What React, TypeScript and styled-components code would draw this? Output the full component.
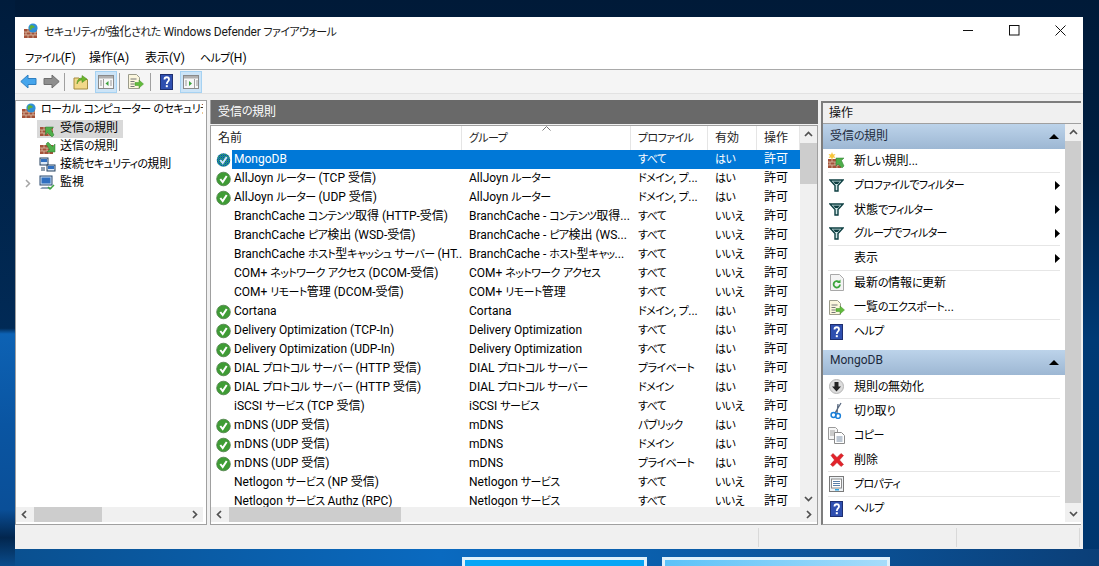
import React from "react";
import styled, { createGlobalStyle } from "styled-components";

const GlobalStyle = createGlobalStyle`
  html, body {
    margin: 0;
    padding: 0;
    width: 1099px;
    height: 566px;
    overflow: hidden;
  }
  body {
    font-family: "Roboto", "Noto Sans CJK JP", sans-serif;
    font-feature-settings: "palt";
    font-size: 12px;
    color: #000;
  }
  svg {
    flex: none;
  }
`;

const Desktop = styled.div`
  position: relative;
  width: 1099px;
  height: 566px;
  padding: 17px 16px 0 15px;
  box-sizing: border-box;
  overflow: hidden;
  background:
    linear-gradient(180deg, #001c3c 0%, #012a56 58%, #0d62b4 59%, #0a55a2 75%, #0a4f98 90%, #02264e 95%, #0a4c8c 100%) left top / 15px 100% no-repeat,
    linear-gradient(90deg, #0a4f8e 0%, #0a6ac0 40%, #0a5ba6 65%, #0b3f78 100%) left bottom / 100% 17px no-repeat,
    linear-gradient(180deg, #001a38 0%, #001f42 30%, #003a75 60%, #00366e 100%);
`;

const TaskThumb = styled.div<{ $left: number; $width: number; $tint: string }>`
  position: absolute;
  left: ${(p) => p.$left}px;
  top: 557px;
  width: ${(p) => p.$width}px;
  height: 12px;
  box-sizing: border-box;
  border: 3px solid #dff1fb;
  border-bottom: 0;
  background: ${(p) => p.$tint};
`;

const Window = styled.div`
  position: relative;
  width: 1068px;
  height: 532px;
  display: flex;
  flex-direction: column;
  background: #f0f0f0;
`;

const TitleBar = styled.div`
  height: 27px;
  flex: none;
  display: flex;
  align-items: center;
  background: #fff;
  padding-left: 8px;
`;

const TitleText = styled.span`
  margin-left: 5px;
  flex: 1;
  color: #1a1a1a;
  letter-spacing: -0.2px;
`;

const WinButton = styled.div`
  width: 46px;
  height: 27px;
  display: flex;
  align-items: center;
  justify-content: center;
`;

const MenuBar = styled.div`
  height: 25px;
  flex: none;
  display: flex;
  align-items: center;
  background: #fff;
  border-bottom: 1px solid #a9a9a9;
  padding-left: 10px;
`;

const MenuItem = styled.span<{ $width: number }>`
  width: ${(p) => p.$width}px;
  white-space: nowrap;
`;

const Toolbar = styled.div`
  height: 24px;
  flex: none;
  box-sizing: border-box;
  display: flex;
  align-items: center;
  background: #f5f5f5;
  padding-left: 1px;
  border-bottom: 1px solid #e2e2e2;
`;

const ToolButton = styled.div<{ $width: number; $active?: boolean }>`
  width: ${(p) => p.$width}px;
  height: 22px;
  box-sizing: border-box;
  display: flex;
  align-items: center;
  justify-content: center;
  background: ${(p) => (p.$active ? "#cce4f7" : "transparent")};
  border: 1px solid ${(p) => (p.$active ? "#a6d2f2" : "transparent")};
`;

const ToolSep = styled.div<{ $left: number; $right: number }>`
  width: 1px;
  height: 18px;
  margin: 0 ${(p) => p.$right}px 0 ${(p) => p.$left}px;
  background: #a0a0a0;
`;

const Main = styled.div`
  flex: 1;
  min-height: 0;
  display: flex;
  gap: 3px;
  padding: 6px 2px 1px 0;
`;

const TreePane = styled.div`
  width: 192px;
  flex: none;
  box-sizing: border-box;
  display: flex;
  flex-direction: column;
  background: #fff;
  border: 1px solid #a0a0a0;
  padding: 1px 3px 2px 0;
`;

const TreeList = styled.div`
  flex: 1;
  min-height: 0;
  overflow: hidden;
`;

const TreeRow = styled.div<{ $indent: number }>`
  height: 18px;
  display: flex;
  align-items: center;
  padding-left: ${(p) => p.$indent}px;
  white-space: nowrap;
  overflow: hidden;
`;

const TreeItem = styled.div<{ $selected?: boolean }>`
  height: 18px;
  flex: none;
  display: flex;
  align-items: center;
  padding: 0 5px 0 2px;
  background: ${(p) => (p.$selected ? "#d9d9d9" : "transparent")};
`;

const TreeLabel = styled.span`
  margin-left: 4px;
  padding-bottom: 6px;
`;

const Chevron = styled.span`
  width: 18px;
  flex: none;
  display: flex;
  justify-content: center;
`;

const CenterPane = styled.div`
  width: 608px;
  flex: none;
  display: flex;
  flex-direction: column;
  box-sizing: border-box;
  border-bottom: 1px solid #a0a0a0;
`;

const PaneHeader = styled.div`
  height: 24px;
  flex: none;
  box-sizing: border-box;
  display: flex;
  align-items: center;
  padding: 0 0 4px 7px;
  background: #696969;
  color: #fff;
  border-left: 1px solid #a0a0a0;
`;

const ListFrame = styled.div`
  flex: 1;
  min-height: 0;
  margin-top: 1px;
  display: flex;
  flex-direction: column;
  background: #fff;
  box-sizing: border-box;
  border: 1px solid #a0a0a0;
  border-bottom: 0;
  padding-bottom: 2px;
`;

const ListBody = styled.div`
  flex: 1;
  min-height: 0;
  display: flex;
`;

const Table = styled.div`
  flex: 1;
  min-width: 0;
  overflow: hidden;
`;

const HeaderRow = styled.div`
  height: 24px;
  display: grid;
  grid-template-columns: 251px 169px 77px 49px 43px;
  position: relative;
  white-space: nowrap;
`;

const HeaderCell = styled.div`
  display: flex;
  align-items: center;
  padding: 0 0 3px 7px;
  border-right: 1px solid #e5e5e5;
  color: #222;
`;

const SortMark = styled.svg`
  position: absolute;
  left: 331px;
  top: 0;
`;

const Row = styled.div`
  height: 19px;
  display: grid;
  grid-template-columns: 251px 169px 77px 49px 43px;
  align-items: center;
  white-space: nowrap;
`;

const NameCell = styled.div`
  display: flex;
  align-items: center;
  height: 19px;
  padding-left: 5px;
  min-width: 0;
`;

const NameText = styled.span<{ $selected?: boolean }>`
  flex: 1;
  line-height: 19px;
  padding-left: 2px;
  background: ${(p) => (p.$selected ? "#0078d7" : "transparent")};
  color: ${(p) => (p.$selected ? "#fff" : "#000")};
  overflow: hidden;
`;

const IconSlot = styled.span`
  width: 16px;
  height: 16px;
  flex: none;
  display: flex;
`;

const Cell = styled.div<{ $selected?: boolean }>`
  height: 19px;
  line-height: 19px;
  padding-left: 7px;
  background: ${(p) => (p.$selected ? "#0078d7" : "transparent")};
  color: ${(p) => (p.$selected ? "#fff" : "#000")};
  overflow: hidden;
`;

const VScroll = styled.div<{ $width: number }>`
  width: ${(p) => p.$width}px;
  flex: none;
  display: flex;
  flex-direction: column;
  background: #f0f0f0;
`;

const ScrollArrow = styled.div`
  flex: none;
  width: 16px;
  height: 16px;
  display: flex;
  align-items: center;
  justify-content: center;
`;

const VThumb = styled.div<{ $offset: number; $height: number }>`
  flex: none;
  margin-top: ${(p) => p.$offset}px;
  height: ${(p) => p.$height}px;
  background: #cdcdcd;
`;

const Spacer = styled.div`
  flex: 1;
`;

const HScroll = styled.div`
  height: 15px;
  flex: none;
  display: flex;
  align-items: center;
  background: #f0f0f0;
`;

const HThumb = styled.div<{ $offset: number; $width: number }>`
  flex: none;
  margin-left: ${(p) => p.$offset}px;
  width: ${(p) => p.$width}px;
  height: 15px;
  background: #cdcdcd;
`;

const ActionPane = styled.div`
  flex: 1;
  min-width: 0;
  display: flex;
  flex-direction: column;
  box-sizing: border-box;
  margin-top: 1px;
  border-top: 2px solid #7d7d7d;
  border-left: 2px solid #7d7d7d;
  background: #fff;
  padding-bottom: 2px;
  border-bottom: 1px solid #a0a0a0;
`;

const ActionTitle = styled.div`
  height: 21px;
  flex: none;
  box-sizing: border-box;
  display: flex;
  align-items: center;
  padding: 0 0 4px 6px;
  background: #f0f0f0;
  border-bottom: 1px solid #a0a0a0;
  color: #111;
`;

const ActionBody = styled.div`
  flex: 1;
  min-height: 0;
  display: flex;
`;

const ActionList = styled.div`
  flex: 1;
  min-width: 0;
  overflow: hidden;
`;

const SectionHeader = styled.div<{ $gap?: number }>`
  height: 25px;
  margin-top: ${(p) => p.$gap ?? 0}px;
  box-sizing: border-box;
  display: flex;
  align-items: center;
  justify-content: space-between;
  padding: 0 6px 0 7px;
  background: linear-gradient(180deg, #bcd3ea 0%, #9db7d3 100%);
  color: #1c2a3c;
`;

const SectionLabel = styled.span`
  padding-bottom: 5px;
`;

const ActionRow = styled.div<{ $height: number; $divider?: boolean }>`
  height: ${(p) => p.$height}px;
  margin: 0 5px;
  box-sizing: border-box;
  display: flex;
  align-items: center;
  border-bottom: 1px solid ${(p) => (p.$divider ? "#e6e6e6" : "transparent")};
`;

const ActionLabel = styled.span`
  margin-left: 9px;
  padding-bottom: 3px;
  flex: 1;
`;

const ActionIcon = styled.span`
  width: 17px;
  height: 17px;
  flex: none;
  display: flex;
  align-items: center;
  justify-content: center;
`;

const StatusBar = styled.div`
  height: 23px;
  flex: none;
  display: flex;
  justify-content: flex-end;
  padding-right: 3px;
  background: #f0f0f0;
`;

const StatusCell = styled.div<{ $width: number }>`
  width: ${(p) => p.$width}px;
  box-sizing: border-box;
  margin: 2px 0;
  border-left: 1px solid #d9d9d9;
  &:last-child {
    border-right: 1px solid #d9d9d9;
  }
`;

// Yu Gothic kana sit much tighter than Noto's, so kana runs get their own span
const Kana = styled.span`
  font-size: 11px;
  letter-spacing: -0.6px;
`;

const jp = (text: string) =>
  text.split(/([\u3040-\u30ff]+)/).map((part, i) => (i % 2 === 1 ? <Kana key={i}>{part}</Kana> : part));

// icons

const Bricks = () => (
  <>
    <rect x="1" y="6" width="13" height="9" fill="#a4523a" />
    <path d="M1 9h13M1 12h13M5 6v3M10 6v3M3 9v3M8 9v3M12 9v3M5 12v3M10 12v3" stroke="#dcc0a8" strokeWidth="0.8" />
  </>
);

const FirewallIcon = () => (
  <svg width="16" height="16" viewBox="0 0 16 16">
    <Bricks />
    <circle cx="10" cy="5" r="4.6" fill="#2f8fd8" />
    <path d="M7 3c2-2 3 0 4 0s1 2-1 2-1 2-2 2-2-2-1-4z" fill="#5cb03c" />
  </svg>
);

const InboundIcon = () => (
  <svg width="17" height="16" viewBox="0 0 17 16">
    <Bricks />
    <path d="M15 14l-2 2-4.500-4.500L6.500 14V6h8l-2.500 2.500z" fill="#4fae4a" stroke="#2e7d32" strokeWidth="0.5" />
  </svg>
);

const OutboundIcon = () => (
  <svg width="17" height="16" viewBox="0 0 17 16">
    <Bricks />
    <path d="M7 5l2-2 4.500 4.500L16 5v8H8l2.500-2.500z" fill="#4fae4a" stroke="#2e7d32" strokeWidth="0.5" />
  </svg>
);

const NetworkIcon = () => (
  <svg width="17" height="16" viewBox="0 0 17 16">
    <rect x="1" y="1" width="8" height="7" fill="#dbe8f5" stroke="#24405f" />
    <rect x="2" y="2" width="6" height="3" fill="#2f6fc0" />
    <rect x="8" y="8" width="8" height="6" fill="#dbe8f5" stroke="#24405f" />
    <rect x="9" y="9" width="6" height="3" fill="#2f6fc0" />
    <path d="M2 11h4M2 13h4" stroke="#24405f" />
  </svg>
);

const MonitorIcon = () => (
  <svg width="17" height="16" viewBox="0 0 17 16">
    <rect x="1" y="1" width="12" height="9" fill="#cfe0f2" stroke="#2b4a70" />
    <rect x="2.500" y="2.500" width="9" height="6" fill="#2f6fc0" />
    <path d="M3 12h8l2 2H1z" fill="#8fa3b8" />
    <path d="M9 12l2 2 4-4" stroke="#3fa63f" strokeWidth="1.500" fill="none" />
  </svg>
);

const CheckIcon = () => (
  <svg width="16" height="16" viewBox="0 0 16 16">
    <circle cx="7.500" cy="8" r="6.800" fill="#3f9c35" stroke="#4d7f48" strokeWidth="0.8" />
    <path d="M4.300 8l2.400 3 4-6" stroke="#fff" strokeWidth="2" fill="none" />
  </svg>
);

const ShieldCheckIcon = () => (
  <svg width="16" height="16" viewBox="0 0 16 16">
    <defs>
      <pattern id="dither" width="2" height="2" patternUnits="userSpaceOnUse">
        <rect width="2" height="2" fill="#0078d7" />
        <rect width="1" height="1" fill="#3f9c35" />
        <rect x="1" y="1" width="1" height="1" fill="#2b6a60" />
      </pattern>
    </defs>
    <circle cx="7.500" cy="8" r="6.800" fill="url(#dither)" />
    <path d="M4.300 8l2.400 3 4-6" stroke="#cfe6f8" strokeWidth="2" fill="none" />
  </svg>
);

const BackIcon = () => (
  <svg width="17" height="15" viewBox="0 0 17 15">
    <path d="M.8 7.500L8 1v3.500h8v6H8V14z" fill="#45a5ec" stroke="#2f7fc0" strokeLinejoin="round" />
  </svg>
);

const ForwardIcon = () => (
  <svg width="17" height="15" viewBox="0 0 17 15">
    <path d="M16.200 7.500L9 1v3.500H1v6h8V14z" fill="#8e8e8e" stroke="#6e6e6e" strokeLinejoin="round" />
  </svg>
);

const FolderUpIcon = () => (
  <svg width="16" height="16" viewBox="0 0 16 16">
    <path d="M1 4h5l1 1.500h7.500V15H1z" fill="#f2d889" stroke="#a58a3f" />
    <path d="M4 10c0-4 2-6 5-6V1.500L14 5l-5 3.500V6c-2 0-4 1-5 4z" fill="#6cb52d" stroke="#4b8a1c" strokeWidth="0.5" />
  </svg>
);

const PaneIcon = ({ flip }: { flip?: boolean }) => (
  <svg width="16" height="14" viewBox="0 0 16 14">
    <rect x="0.500" y="0.500" width="15" height="13" fill="#f7f7f7" stroke="#8a8a8a" />
    <rect x="1" y="1" width="14" height="2.500" fill="#b0b0b0" />
    <path d={flip ? "M11.500 4v9" : "M5.500 4v9"} stroke="#a0a0a0" />
    <path d={flip ? "M6 6l3 2.500L6 11z" : "M10.500 6l-3 2.500 3 2.500z"} fill="#3ea33e" />
    <path d={flip ? "M2 6h2M2 8h2M2 10h2M13 6h2M13 8h2M13 10h2" : "M2 6h2M2 8h2M2 10h2M12 6h2M12 8h2M12 10h2"} stroke="#9a9a9a" />
  </svg>
);

const ExportIcon = () => (
  <svg width="17" height="17" viewBox="0 0 17 17">
    <path d="M1.500 1.500h8l3 3v11h-11z" fill="#fbf6dd" stroke="#9c9c8c" />
    <path d="M3.500 6h6M3.500 8.500h4M3.500 11h4M3.500 13.500h4" stroke="#777" />
    <path d="M8 9.500h4V7l4.500 4-4.500 4v-2.500H8z" fill="#62bb3c" stroke="#45912a" strokeWidth="0.5" />
  </svg>
);

const HelpIcon = () => (
  <svg width="13" height="16" viewBox="0 0 13 16">
    <rect x="0.500" y="0.500" width="12" height="15" fill="#2f4fb0" stroke="#1f2f70" />
    <path d="M4.500 5.500c0-3 4.500-3 4.500 0 0 2-2.200 2-2.200 4.500" stroke="#fff" strokeWidth="1.800" fill="none" />
    <rect x="5.800" y="11.200" width="2" height="2" fill="#fff" />
  </svg>
);

const NewRuleIcon = () => (
  <svg width="17" height="17" viewBox="0 0 17 17">
    <rect x="0" y="7" width="13" height="9" fill="#a4523a" />
    <path d="M0 10h13M0 13h13M4 7v3M9 7v3M2 10v3M7 10v3M11 10v3M4 13v3M9 13v3" stroke="#dcc0a8" strokeWidth="0.8" />
    <path d="M16 14l-2 2-4-4-2 2V6h8l-2.500 2.500z" fill="#4fae4a" stroke="#2e7d32" strokeWidth="0.5" />
    <path d="M4 0l1 2.500L7.500 2 6 4l1.500 2L5 5.500 4 8 3 5.500.5 6 2 4 .5 2 3 2.500z" fill="#f8c63c" />
  </svg>
);

const FilterIcon = () => (
  <svg width="15" height="13" viewBox="0 0 15 13">
    <path d="M1 1h13L9 6.500V12H6V6.500z" fill="#cfe6e6" stroke="#0e3f42" strokeWidth="1.400" />
    <path d="M4 2.500h7L8.800 5H6.200z" fill="#0e3f42" />
  </svg>
);

const RefreshIcon = () => (
  <svg width="14" height="17" viewBox="0 0 14 17">
    <path d="M.5.500h9l4 4v12H.5z" fill="#f4f4f4" stroke="#a8a8a8" />
    <path d="M10 10.500a3.200 3.200 0 1 1-1-2.500" stroke="#3ca63c" strokeWidth="1.800" fill="none" />
    <path d="M10.500 5.500v3.500H7z" fill="#3ca63c" />
  </svg>
);

const DisableIcon = () => (
  <svg width="15" height="15" viewBox="0 0 15 15">
    <circle cx="7.500" cy="7.500" r="7" fill="#dcdcdc" stroke="#b5b5b5" />
    <path d="M5.500 3h4v4.500H12l-4.500 5-4.500-5h2.500z" fill="#222" />
  </svg>
);

const ScissorsIcon = () => (
  <svg width="13" height="17" viewBox="0 0 13 17">
    <path d="M11 1L5 11M8 2L7 11" stroke="#5a6a80" strokeWidth="1.300" fill="none" />
    <circle cx="3.500" cy="13" r="2.400" fill="none" stroke="#1a7fd8" strokeWidth="1.500" />
    <circle cx="8" cy="14" r="2.400" fill="none" stroke="#1a7fd8" strokeWidth="1.500" />
  </svg>
);

const CopyIcon = () => (
  <svg width="17" height="17" viewBox="0 0 17 17">
    <path d="M.5.500h7l2 2v10h-9z" fill="#f6f6f6" stroke="#9a9a9a" />
    <path d="M2 4h5M2 6h5M2 8h5" stroke="#a0a0a0" />
    <path d="M6.500 5.500h7l3 3v8h-10z" fill="#fff" stroke="#8a8a8a" />
    <path d="M8.500 10h6M8.500 12h6M8.500 14h6" stroke="#7b8ea6" />
  </svg>
);

const DeleteIcon = () => (
  <svg width="16" height="16" viewBox="0 0 16 16">
    <path d="M2 3.500l2-2L8 5.500l4-4 2.500 2L10.500 8l4 4.500-2.500 2L8 10.500l-4 4-2.500-2L5.500 8z" fill="#e3222a" stroke="#b01a1a" strokeWidth="0.5" />
  </svg>
);

const PropertiesIcon = () => (
  <svg width="15" height="16" viewBox="0 0 15 16">
    <rect x="0.500" y="0.500" width="14" height="15" fill="#eef2f5" stroke="#7a7a7a" />
    <rect x="2.500" y="3" width="10" height="9" fill="#fff" stroke="#8a8a8a" />
    <path d="M4 5.500h7M4 7.500h7M4 9.500h7" stroke="#5a7fa8" />
    <rect x="6" y="13" width="4" height="1.500" fill="#29a5e6" />
  </svg>
);

const ArrowUp = () => (
  <svg width="9" height="6" viewBox="0 0 9 6">
    <path d="M1 5l3.500-3.500L8 5" stroke="#505050" strokeWidth="1.700" fill="none" />
  </svg>
);

const ArrowDown = () => (
  <svg width="9" height="6" viewBox="0 0 9 6">
    <path d="M1 1l3.500 3.500L8 1" stroke="#505050" strokeWidth="1.700" fill="none" />
  </svg>
);

const ArrowLeft = () => (
  <svg width="6" height="9" viewBox="0 0 6 9">
    <path d="M5 1L1.500 4.500 5 8" stroke="#505050" strokeWidth="1.700" fill="none" />
  </svg>
);

const ArrowRight = () => (
  <svg width="6" height="9" viewBox="0 0 6 9">
    <path d="M1 1l3.500 3.500L1 8" stroke="#505050" strokeWidth="1.700" fill="none" />
  </svg>
);

const TriUp = () => (
  <svg width="10" height="5" viewBox="0 0 10 5">
    <path d="M0 5l5-5 5 5z" fill="#000" />
  </svg>
);

const TriRight = () => (
  <svg width="5" height="9" viewBox="0 0 5 9">
    <path d="M0 0l5 4.500L0 9z" fill="#000" />
  </svg>
);

type Rule = {
  name: string;
  group: string;
  profile: string;
  enabled: string;
  state: "on" | "off" | "selected";
};

const ALL = "すべて";
const DOMAIN_ETC = "ドメイン, プ...";

const rules: Rule[] = [
  { name: "MongoDB", group: "", profile: ALL, enabled: "はい", state: "selected" },
  { name: "AllJoyn ルーター (TCP 受信)", group: "AllJoyn ルーター", profile: DOMAIN_ETC, enabled: "はい", state: "on" },
  { name: "AllJoyn ルーター (UDP 受信)", group: "AllJoyn ルーター", profile: DOMAIN_ETC, enabled: "はい", state: "on" },
  { name: "BranchCache コンテンツ取得 (HTTP-受信)", group: "BranchCache - コンテンツ取得...", profile: ALL, enabled: "いいえ", state: "off" },
  { name: "BranchCache ピア検出 (WSD-受信)", group: "BranchCache - ピア検出 (WS...", profile: ALL, enabled: "いいえ", state: "off" },
  { name: "BranchCache ホスト型キャッシュ サーバー (HT...", group: "BranchCache - ホスト型キャッ...", profile: ALL, enabled: "いいえ", state: "off" },
  { name: "COM+ ネットワーク アクセス (DCOM-受信)", group: "COM+ ネットワーク アクセス", profile: ALL, enabled: "いいえ", state: "off" },
  { name: "COM+ リモート管理 (DCOM-受信)", group: "COM+ リモート管理", profile: ALL, enabled: "いいえ", state: "off" },
  { name: "Cortana", group: "Cortana", profile: DOMAIN_ETC, enabled: "はい", state: "on" },
  { name: "Delivery Optimization (TCP-In)", group: "Delivery Optimization", profile: ALL, enabled: "はい", state: "on" },
  { name: "Delivery Optimization (UDP-In)", group: "Delivery Optimization", profile: ALL, enabled: "はい", state: "on" },
  { name: "DIAL プロトコル サーバー (HTTP 受信)", group: "DIAL プロトコル サーバー", profile: "プライベート", enabled: "はい", state: "on" },
  { name: "DIAL プロトコル サーバー (HTTP 受信)", group: "DIAL プロトコル サーバー", profile: "ドメイン", enabled: "はい", state: "on" },
  { name: "iSCSI サービス (TCP 受信)", group: "iSCSI サービス", profile: ALL, enabled: "いいえ", state: "off" },
  { name: "mDNS (UDP 受信)", group: "mDNS", profile: "パブリック", enabled: "はい", state: "on" },
  { name: "mDNS (UDP 受信)", group: "mDNS", profile: "ドメイン", enabled: "はい", state: "on" },
  { name: "mDNS (UDP 受信)", group: "mDNS", profile: "プライベート", enabled: "はい", state: "on" },
  { name: "Netlogon サービス (NP 受信)", group: "Netlogon サービス", profile: ALL, enabled: "いいえ", state: "off" },
  { name: "Netlogon サービス Authz (RPC)", group: "Netlogon サービス", profile: ALL, enabled: "いいえ", state: "off" },
];

function RuleRow({ rule }: { rule: Rule }) {
  const selected = rule.state === "selected";
  return (
    <Row>
      <NameCell>
        <IconSlot>
          {rule.state === "on" && <CheckIcon />}
          {selected && <ShieldCheckIcon />}
        </IconSlot>
        <NameText $selected={selected}>{jp(rule.name)}</NameText>
      </NameCell>
      <Cell $selected={selected}>{jp(rule.group)}</Cell>
      <Cell $selected={selected}>{jp(rule.profile)}</Cell>
      <Cell $selected={selected}>{jp(rule.enabled)}</Cell>
      <Cell $selected={selected}>許可</Cell>
    </Row>
  );
}

function App() {
  return (
    <>
      <GlobalStyle />
      <Desktop>
        <Window>
          <TitleBar>
            <FirewallIcon />
            <TitleText>{jp("セキュリティが強化された Windows Defender ファイアウォール")}</TitleText>
            <WinButton>
              <svg width="11" height="11" viewBox="0 0 11 11">
                <path d="M0 5.500h10" stroke="#111" />
              </svg>
            </WinButton>
            <WinButton>
              <svg width="11" height="11" viewBox="0 0 11 11">
                <rect x="0.500" y="0.500" width="9.500" height="9.500" fill="none" stroke="#111" />
              </svg>
            </WinButton>
            <WinButton>
              <svg width="11" height="11" viewBox="0 0 11 11">
                <path d="M.5.500l10 10M10.500.5l-10 10" stroke="#111" />
              </svg>
            </WinButton>
          </TitleBar>
          <MenuBar>
            <MenuItem $width={64}>{jp("ファイル(F)")}</MenuItem>
            <MenuItem $width={56}>操作(A)</MenuItem>
            <MenuItem $width={55}>表示(V)</MenuItem>
            <MenuItem $width={60}>{jp("ヘルプ(H)")}</MenuItem>
          </MenuBar>
          <Toolbar>
            <ToolButton $width={24}>
              <BackIcon />
            </ToolButton>
            <ToolButton $width={22}>
              <ForwardIcon />
            </ToolButton>
            <ToolSep $left={2} $right={2} />
            <ToolButton $width={28}>
              <FolderUpIcon />
            </ToolButton>
            <ToolButton $width={22} $active>
              <PaneIcon />
            </ToolButton>
            <ToolSep $left={2} $right={2} />
            <ToolButton $width={26}>
              <ExportIcon />
            </ToolButton>
            <ToolSep $left={2} $right={2} />
            <ToolButton $width={27}>
              <HelpIcon />
            </ToolButton>
            <ToolButton $width={22} $active>
              <PaneIcon flip />
            </ToolButton>
          </Toolbar>
          <Main>
            <TreePane>
              <TreeList>
                <TreeRow $indent={3}>
                  <TreeItem>
                    <FirewallIcon />
                    <TreeLabel>{jp("ローカル コンピューター のセキュリティ:")}</TreeLabel>
                  </TreeItem>
                </TreeRow>
                <TreeRow $indent={21}>
                  <TreeItem $selected>
                    <InboundIcon />
                    <TreeLabel>{jp("受信の規則")}</TreeLabel>
                  </TreeItem>
                </TreeRow>
                <TreeRow $indent={21}>
                  <TreeItem>
                    <OutboundIcon />
                    <TreeLabel>{jp("送信の規則")}</TreeLabel>
                  </TreeItem>
                </TreeRow>
                <TreeRow $indent={21}>
                  <TreeItem>
                    <NetworkIcon />
                    <TreeLabel>{jp("接続セキュリティの規則")}</TreeLabel>
                  </TreeItem>
                </TreeRow>
                <TreeRow $indent={3}>
                  <Chevron>
                    <svg width="6" height="9" viewBox="0 0 6 9">
                      <path d="M1 1l3.500 3.500L1 8" stroke="#a6a6a6" strokeWidth="1.500" fill="none" />
                    </svg>
                  </Chevron>
                  <TreeItem>
                    <MonitorIcon />
                    <TreeLabel>監視</TreeLabel>
                  </TreeItem>
                </TreeRow>
              </TreeList>
              <HScroll>
                <ScrollArrow>
                  <ArrowLeft />
                </ScrollArrow>
                <HThumb $offset={2} $width={68} />
                <Spacer />
                <ScrollArrow>
                  <ArrowRight />
                </ScrollArrow>
              </HScroll>
            </TreePane>
            <CenterPane>
              <PaneHeader>{jp("受信の規則")}</PaneHeader>
              <ListFrame>
                <ListBody>
                  <Table>
                    <HeaderRow>
                      <HeaderCell>名前</HeaderCell>
                      <HeaderCell>{jp("グループ")}</HeaderCell>
                      <HeaderCell>{jp("プロファイル")}</HeaderCell>
                      <HeaderCell>有効</HeaderCell>
                      <HeaderCell>操作</HeaderCell>
                      <SortMark width="9" height="5" viewBox="0 0 9 5">
                        <path d="M.5 4.500l4-4 4 4" stroke="#777" fill="none" />
                      </SortMark>
                    </HeaderRow>
                    {rules.map((rule, i) => (
                      <RuleRow key={i} rule={rule} />
                    ))}
                  </Table>
                  <VScroll $width={17}>
                    <ScrollArrow>
                      <ArrowUp />
                    </ScrollArrow>
                    <VThumb $offset={1} $height={41} />
                    <Spacer />
                    <ScrollArrow>
                      <ArrowDown />
                    </ScrollArrow>
                  </VScroll>
                </ListBody>
                <HScroll>
                  <ScrollArrow>
                    <ArrowLeft />
                  </ScrollArrow>
                  <HThumb $offset={2} $width={172} />
                  <Spacer />
                  <ScrollArrow>
                    <ArrowRight />
                  </ScrollArrow>
                </HScroll>
              </ListFrame>
            </CenterPane>
            <ActionPane>
              <ActionTitle>操作</ActionTitle>
              <ActionBody>
                <ActionList>
                  <SectionHeader>
                    <SectionLabel>{jp("受信の規則")}</SectionLabel>
                    <TriUp />
                  </SectionHeader>
                  <ActionRow $height={24} $divider>
                    <ActionIcon><NewRuleIcon /></ActionIcon>
                    <ActionLabel>{jp("新しい規則...")}</ActionLabel>
                  </ActionRow>
                  <ActionRow $height={25}>
                    <ActionIcon><FilterIcon /></ActionIcon>
                    <ActionLabel>{jp("プロファイルでフィルター")}</ActionLabel>
                    <TriRight />
                  </ActionRow>
                  <ActionRow $height={24}>
                    <ActionIcon><FilterIcon /></ActionIcon>
                    <ActionLabel>{jp("状態でフィルター")}</ActionLabel>
                    <TriRight />
                  </ActionRow>
                  <ActionRow $height={24} $divider>
                    <ActionIcon><FilterIcon /></ActionIcon>
                    <ActionLabel>{jp("グループでフィルター")}</ActionLabel>
                    <TriRight />
                  </ActionRow>
                  <ActionRow $height={25} $divider>
                    <ActionIcon />
                    <ActionLabel>表示</ActionLabel>
                    <TriRight />
                  </ActionRow>
                  <ActionRow $height={24}>
                    <ActionIcon><RefreshIcon /></ActionIcon>
                    <ActionLabel>{jp("最新の情報に更新")}</ActionLabel>
                  </ActionRow>
                  <ActionRow $height={25} $divider>
                    <ActionIcon><ExportIcon /></ActionIcon>
                    <ActionLabel>{jp("一覧のエクスポート...")}</ActionLabel>
                  </ActionRow>
                  <ActionRow $height={24}>
                    <ActionIcon><HelpIcon /></ActionIcon>
                    <ActionLabel>{jp("ヘルプ")}</ActionLabel>
                  </ActionRow>
                  <SectionHeader $gap={6}>
                    <SectionLabel>MongoDB</SectionLabel>
                    <TriUp />
                  </SectionHeader>
                  <ActionRow $height={24} $divider>
                    <ActionIcon><DisableIcon /></ActionIcon>
                    <ActionLabel>{jp("規則の無効化")}</ActionLabel>
                  </ActionRow>
                  <ActionRow $height={24}>
                    <ActionIcon><ScissorsIcon /></ActionIcon>
                    <ActionLabel>{jp("切り取り")}</ActionLabel>
                  </ActionRow>
                  <ActionRow $height={25}>
                    <ActionIcon><CopyIcon /></ActionIcon>
                    <ActionLabel>{jp("コピー")}</ActionLabel>
                  </ActionRow>
                  <ActionRow $height={24} $divider>
                    <ActionIcon><DeleteIcon /></ActionIcon>
                    <ActionLabel>削除</ActionLabel>
                  </ActionRow>
                  <ActionRow $height={25} $divider>
                    <ActionIcon><PropertiesIcon /></ActionIcon>
                    <ActionLabel>{jp("プロパティ")}</ActionLabel>
                  </ActionRow>
                  <ActionRow $height={24}>
                    <ActionIcon><HelpIcon /></ActionIcon>
                    <ActionLabel>{jp("ヘルプ")}</ActionLabel>
                  </ActionRow>
                </ActionList>
                <VScroll $width={16}>
                  <ScrollArrow>
                    <ArrowUp />
                  </ScrollArrow>
                  <VThumb $offset={1} $height={362} />
                  <Spacer />
                  <ScrollArrow>
                    <ArrowDown />
                  </ScrollArrow>
                </VScroll>
              </ActionBody>
            </ActionPane>
          </Main>
          <StatusBar>
            <StatusCell $width={198} />
            <StatusCell $width={124} />
          </StatusBar>
        </Window>
        <TaskThumb $left={462} $width={185} $tint="#08a6f5" />
        <TaskThumb $left={662} $width={228} $tint="linear-gradient(90deg, #5cc2f8, #a6dcfa)" />
      </Desktop>
    </>
  );
}

export default App;
